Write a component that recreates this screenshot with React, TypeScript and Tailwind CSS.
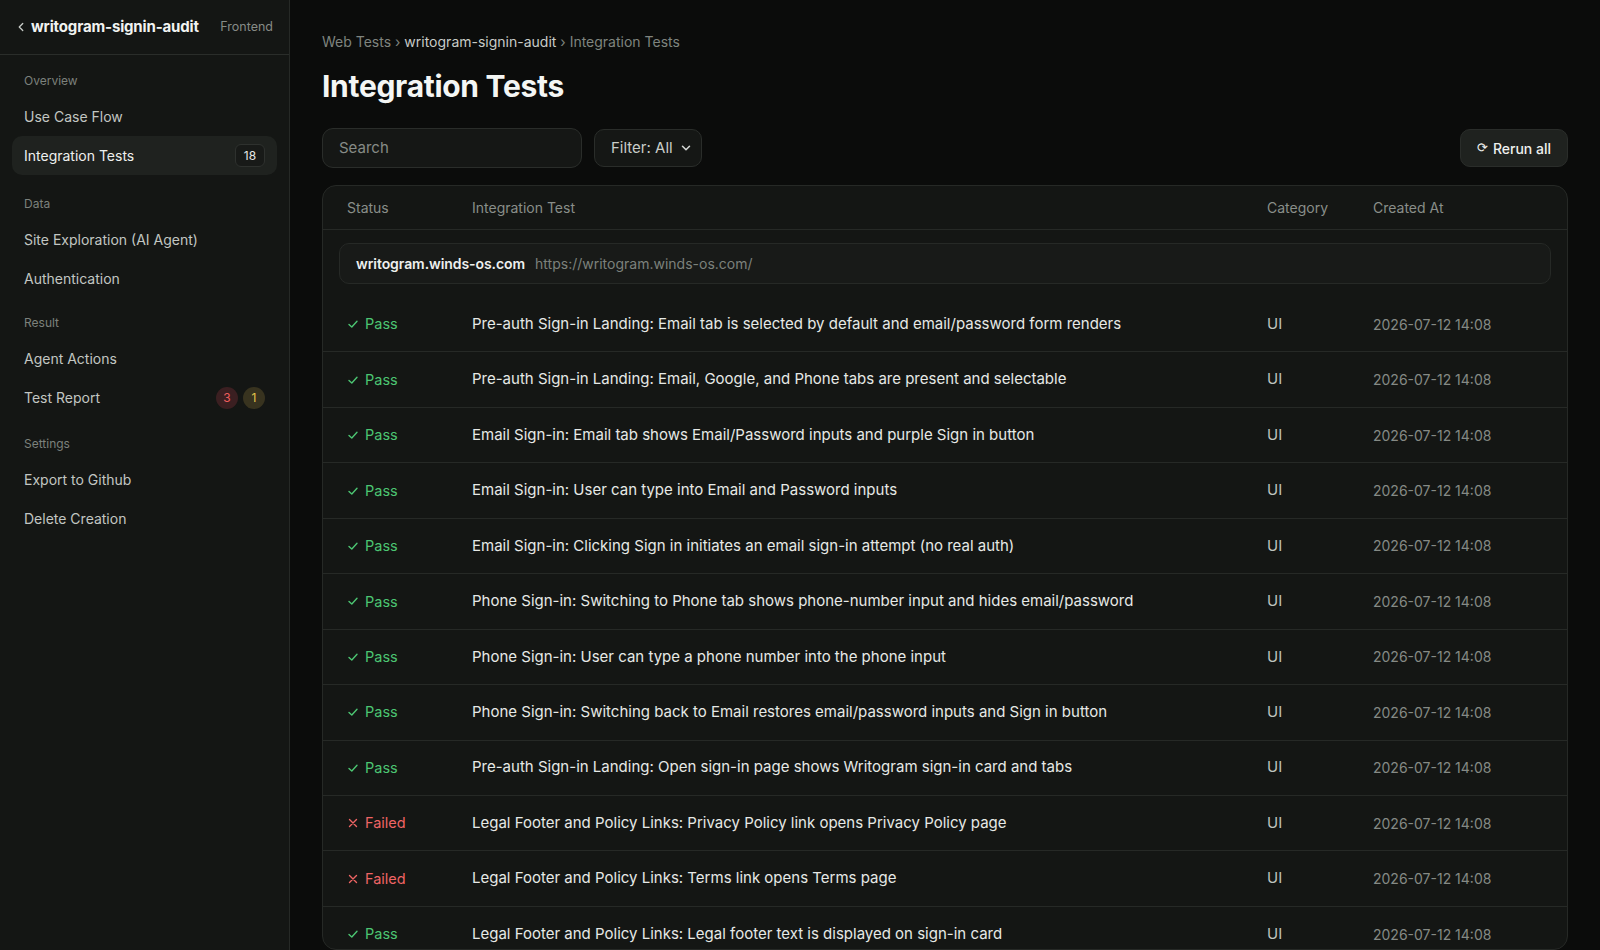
import { ChevronDown, ChevronLeft } from 'lucide-react'

type Status = 'pass' | 'failed'

type TestRow = {
  status: Status
  title: string
}

const TESTS: TestRow[] = [
  { status: 'pass', title: 'Pre-auth Sign-in Landing: Email tab is selected by default and email/password form renders' },
  { status: 'pass', title: 'Pre-auth Sign-in Landing: Email, Google, and Phone tabs are present and selectable' },
  { status: 'pass', title: 'Email Sign-in: Email tab shows Email/Password inputs and purple Sign in button' },
  { status: 'pass', title: 'Email Sign-in: User can type into Email and Password inputs' },
  { status: 'pass', title: 'Email Sign-in: Clicking Sign in initiates an email sign-in attempt (no real auth)' },
  { status: 'pass', title: 'Phone Sign-in: Switching to Phone tab shows phone-number input and hides email/password' },
  { status: 'pass', title: 'Phone Sign-in: User can type a phone number into the phone input' },
  { status: 'pass', title: 'Phone Sign-in: Switching back to Email restores email/password inputs and Sign in button' },
  { status: 'pass', title: 'Pre-auth Sign-in Landing: Open sign-in page shows Writogram sign-in card and tabs' },
  { status: 'failed', title: 'Legal Footer and Policy Links: Privacy Policy link opens Privacy Policy page' },
  { status: 'failed', title: 'Legal Footer and Policy Links: Terms link opens Terms page' },
  { status: 'pass', title: 'Legal Footer and Policy Links: Legal footer text is displayed on sign-in card' },
]

type NavItem = {
  label: string
  active?: boolean
  count?: number
  badges?: boolean
}

// spacing above each group is a little uneven in the design
const NAV: { section: string; gap: string; items: NavItem[] }[] = [
  { section: 'Overview', gap: '', items: [{ label: 'Use Case Flow' }, { label: 'Integration Tests', active: true, count: 18 }] },
  { section: 'Data', gap: 'mt-[21px]', items: [{ label: 'Site Exploration (AI Agent)' }, { label: 'Authentication' }] },
  { section: 'Result', gap: 'mt-[17px]', items: [{ label: 'Agent Actions' }, { label: 'Test Report', badges: true }] },
  { section: 'Settings', gap: 'mt-[19px]', items: [{ label: 'Export to Github' }, { label: 'Delete Creation' }] },
]

function Sidebar() {
  return (
    <aside className="flex w-[290px] shrink-0 flex-col border-r border-[#262926] bg-[#141614]">
      <div className="flex h-[55px] items-center border-b border-[#2a2d2a] pl-[14px] pr-4">
        <ChevronLeft className="h-3.5 w-3.5 text-[#c9cdc9]" strokeWidth={2.2} />
        <span className="ml-[3px] text-[15px] font-bold tracking-[-0.01em] text-[#f1f3f1]">writogram-signin-audit</span>
        <span className="ml-auto text-[12.5px] text-[#868b86]">Frontend</span>
      </div>

      <nav className="px-3 pt-[18px]">
        {NAV.map((group) => (
          <div key={group.section} className={group.gap}>
            <div className="mb-[8px] h-4 px-3 text-[12px] leading-4 text-[#7c817c]">{group.section}</div>
            {group.items.map((item) => (
              <div
                key={item.label}
                className={`flex h-[39px] items-center rounded-[10px] px-3 text-[14px] ${
                  item.active ? 'bg-[#1f221f] text-[#eef0ee]' : 'text-[#c2c6c2]'
                }`}
              >
                <span>{item.label}</span>
                {item.count !== undefined && (
                  <span className="ml-auto flex h-[23px] w-[30px] items-center justify-center rounded-md border border-[#2e312e] bg-[#181a18] text-[12px] text-[#e6e8e6]">
                    {item.count}
                  </span>
                )}
                {item.badges && (
                  <span className="ml-auto flex gap-[5px]">
                    <span className="flex h-[22px] w-[22px] items-center justify-center rounded-full bg-[#3b1f21] text-[12px] text-[#f05d5d]">3</span>
                    <span className="flex h-[22px] w-[22px] items-center justify-center rounded-full bg-[#38331f] text-[12px] text-[#e3c54a]">1</span>
                  </span>
                )}
              </div>
            ))}
          </div>
        ))}
      </nav>
    </aside>
  )
}

function StatusCell({ status }: { status: Status }) {
  if (status === 'pass') {
    return (
      <div className="flex items-center gap-[7px] text-[14.5px] text-[#4cc572]">
        <svg className="h-[10px] w-[10px]" viewBox="0 0 10 10" fill="none" stroke="currentColor" strokeWidth={1.4}>
          <path d="M1 5.4 L3.8 8 L9 2.2" strokeLinecap="round" strokeLinejoin="round" />
        </svg>
        <span>Pass</span>
      </div>
    )
  }
  return (
    <div className="flex items-center gap-[7px] text-[14.5px] text-[#ef6464]">
      <svg className="h-[10px] w-[10px]" viewBox="0 0 10 10" fill="none" stroke="currentColor" strokeWidth={1.4}>
        <path d="M1.5 1.5 L8.5 8.5 M8.5 1.5 L1.5 8.5" strokeLinecap="round" />
      </svg>
      <span>Failed</span>
    </div>
  )
}

export default function App() {
  return (
    <div
      className="flex h-[950px] w-full overflow-hidden bg-[#0b0c0b]"
      style={{ fontFamily: 'Inter, "Noto Sans", "Liberation Sans", sans-serif' }}
    >
      <Sidebar />

      <main className="flex min-w-0 flex-1 flex-col px-8 pt-[32px]">
        <div className="text-[14px] leading-5 text-[#7f847f]">
          Web Tests › <span className="text-[#c7cbc7]">writogram-signin-audit</span> › Integration Tests
        </div>
        <h1 className="mt-[14px] text-[30px] font-bold leading-10 tracking-[-0.01em] text-[#f4f6f4]">Integration Tests</h1>

        <div className="mt-[22px] flex items-center">
          <div className="flex h-10 w-[260px] items-center rounded-[11px] border border-[#2a2d2a] bg-[#151715] pl-4 text-[15px] text-[#868b86]">
            Search
          </div>
          <div className="ml-3 flex h-[38px] w-[108px] items-center rounded-[10px] border border-[#2a2d2a] bg-[#151715] pl-4 pr-2 text-[15px] text-[#c9cdc9]">
            <span>Filter: All</span>
            <ChevronDown className="ml-auto h-3.5 w-3.5 text-[#d4d7d4]" strokeWidth={2.6} />
          </div>
          <button className="ml-auto flex h-[38px] items-center gap-[5px] rounded-[10px] border border-[#2a2d2a] bg-[#1f221f] pl-4 pr-4 text-[14px] font-medium text-[#eef0ee]">
            <span className="text-[13px]">⟳</span>
            Rerun all
          </button>
        </div>

        <div className="mt-[17px] overflow-hidden rounded-[14px] border border-[#262926] bg-[#141614]">
          <div className="grid h-[44px] grid-cols-[125px_1fr_106px_170px] items-center border-b border-[#262926] px-6 text-[14px] text-[#898e89]">
            <span>Status</span>
            <span>Integration Test</span>
            <span>Category</span>
            <span>Created At</span>
          </div>

          <div className="px-4 pb-3 pt-[13px]">
            <div className="flex h-[41px] items-center gap-2.5 rounded-[10px] border border-[#262926] bg-[#181a18] pl-[16px] text-[14px]">
              <span className="font-semibold tracking-[-0.005em] text-[#eef0ee]">writogram.winds-os.com</span>
              <span className="text-[#7c817c]">https://writogram.winds-os.com/</span>
            </div>
          </div>

          {TESTS.map((t, i) => (
            <div
              key={i}
              className={`grid h-[55.45px] grid-cols-[125px_1fr_106px_170px] items-center px-6 ${
                i === 0 ? 'pt-px' : 'border-t border-[#262926]'
              }`}
            >
              <div className="pl-px">
                <StatusCell status={t.status} />
              </div>
              <span className="text-[15px] text-[#e6e9e6]">{t.title}</span>
              <span className="text-[15px] text-[#bfc3bf]">UI</span>
              <span className="text-[14px] text-[#858a85]">2026-07-12 14:08</span>
            </div>
          ))}
        </div>
      </main>
    </div>
  )
}
